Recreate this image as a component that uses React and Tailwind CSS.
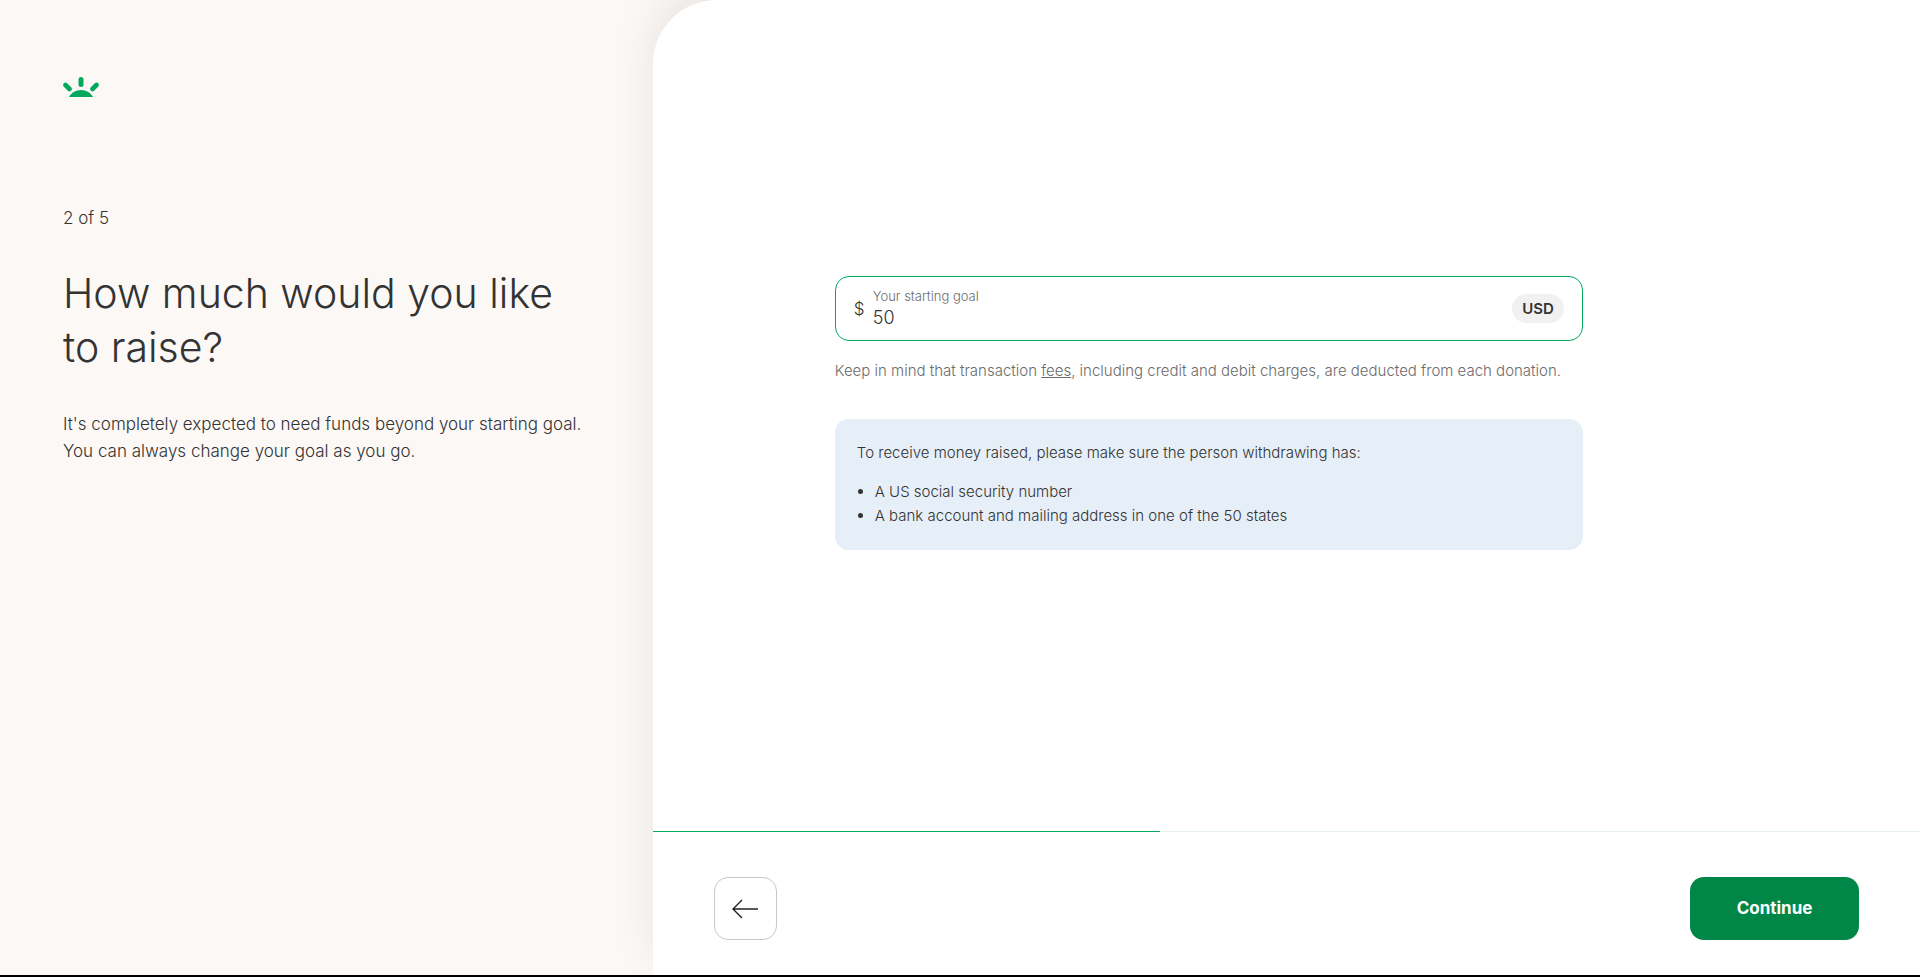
function Logo() {
  return (
    <svg viewBox="0 0 36 20" className="h-5 w-9" role="img" aria-label="Home" fill="#02a95c">
      <path d="M6 20C8 16 12.700 13 18 13s10 3 12 7z" />
      <rect x="15.500" y="0" width="5" height="10" rx="2.500" />
      <path d="M2.500 8l4 4M33.500 8l-4 4" stroke="#02a95c" strokeWidth="4.600" strokeLinecap="round" />
    </svg>
  );
}

function Intro() {
  return (
    <aside className="w-[34%] shrink-0 pl-[63px] pr-12 pt-[77px]">
      <a href="#" className="block w-9">
        <Logo />
      </a>
      <p className="mt-[108px] text-[17px] leading-[27px]">2 of 5</p>
      <h1 className="mt-[34px] text-[41px] font-light leading-[54px] text-[#333]">
        How much would you like
        <br />
        to raise?
      </h1>
      <p className="mt-[37px] text-[17px] leading-[27px]">
        It's completely expected to need funds beyond your starting goal.
        <br />
        You can always change your goal as you go.
      </p>
    </aside>
  );
}

function GoalField() {
  return (
    <div className="flex h-[65px] items-center rounded-[14px] border border-[#02a95c] px-[18px]">
      <span className="w-[19px] text-[17px] leading-6">$</span>
      <div className="flex flex-1 flex-col pb-[2px]">
        <label htmlFor="goal" className="text-[13px] leading-5 text-[#6b6b6b]">
          Your starting goal
        </label>
        <input
          id="goal"
          type="text"
          inputMode="numeric"
          defaultValue="50"
          className="w-full bg-transparent text-[18px] font-light leading-6 outline-none"
        />
      </div>
      <span className="rounded-full bg-[#f1f1f1] px-[10px] text-[15px] font-semibold leading-[29px] text-[#333]">
        USD
      </span>
    </div>
  );
}

function Footer() {
  return (
    <footer className="shrink-0">
      <div role="progressbar" aria-label="Step 2 of 5" aria-valuenow={40} className="h-px bg-[#e4f1ec]">
        <div className="h-px w-2/5 bg-[#02a95c]" />
      </div>
      <div className="flex items-center justify-between px-[61px] pb-[35px] pt-[45px]">
        <button
          type="button"
          aria-label="Back"
          className="flex size-[63px] items-center justify-center rounded-[14px] border border-[#c8c8c8]"
        >
          <svg viewBox="0 0 26 20" className="h-5 w-[26px]" fill="none" stroke="#222" strokeWidth="1.400">
            <path d="M26 10H1M10 1L1 10l9 9" />
          </svg>
        </button>
        <button
          type="button"
          className="h-[63px] w-[169px] rounded-[14px] bg-[#008748] text-[17px] font-bold text-white"
        >
          Continue
        </button>
      </div>
    </footer>
  );
}

export default function App() {
  return (
    <div className="flex h-screen flex-col overflow-hidden border-b-2 border-black bg-[#fcf8f6] font-['Inter',sans-serif] font-light text-[#333]">
      <div className="flex min-h-0 flex-1">
        <Intro />
        <section className="flex flex-1 flex-col rounded-tl-[64px] bg-white shadow-[0_-16px_45px_rgba(0,0,0,0.08)]">
          <main className="flex-1 pl-[182px] pr-12 pt-[276px]">
            <div className="max-w-[748px]">
              <GoalField />
              <p className="mt-[18px] text-[15px] leading-6 text-[#6b6b6b]">
                Keep in mind that transaction{" "}
                <a href="#" className="underline">
                  fees
                </a>
                , including credit and debit charges, are deducted from each donation.
              </p>
              <div className="mt-9 rounded-[14px] bg-[#e6eff7] px-[22px] pb-[22px] pt-[22px] text-[15px] leading-6">
                <p>To receive money raised, please make sure the person withdrawing has:</p>
                <ul className="mt-[15px] list-disc pl-[18px]">
                  <li>A US social security number</li>
                  <li>A bank account and mailing address in one of the 50 states</li>
                </ul>
              </div>
            </div>
          </main>
          <Footer />
        </section>
      </div>
    </div>
  );
}
